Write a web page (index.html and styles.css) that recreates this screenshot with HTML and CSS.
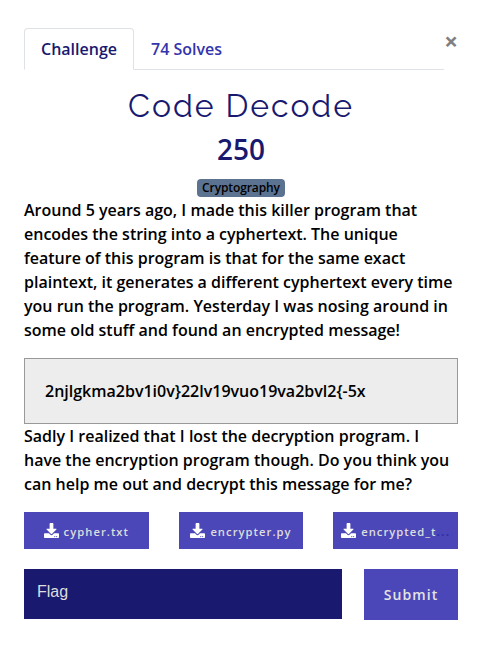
FILE: index.html
```html
<!DOCTYPE html>
<html lang="en">
<head>
<meta charset="utf-8">
<title>Code Decode</title>
<link rel="stylesheet" href="styles.css">
</head>
<body>
<svg class="defs" width="0" height="0"><symbol id="download" viewBox="0 0 512 512"><path fill="currentColor" d="M216 0h80c13.300 0 24 10.700 24 24v168h87.700c17.800 0 26.700 21.500 14.100 34.100L269.700 378.300c-7.500 7.500-19.800 7.500-27.300 0L90.100 226.100c-12.600-12.600-3.700-34.100 14.100-34.100H192V24c0-13.300 10.700-24 24-24zm296 376v112c0 13.300-10.700 24-24 24H24c-13.300 0-24-10.700-24-24V376c0-13.300 10.700-24 24-24h146.700l49 49c20.100 20.100 52.500 20.100 72.600 0l49-49H488c13.300 0 24 10.700 24 24zm-124 88c0-11-9-20-20-20s-20 9-20 20 9 20 20 20 20-9 20-20zm64 0c0-11-9-20-20-20s-20 9-20 20 9 20 20 20 20-9 20-20z"/></symbol></svg>
<main class="modal">
  <header class="top">
    <nav class="tabs">
      <a class="tab active">Challenge</a>
      <a class="tab">74 Solves</a>
    </nav>
    <button class="close" aria-label="Close">×</button>
  </header>
  <h2 class="name">Code Decode</h2>
  <h3 class="value">250</h3>
  <div class="tags"><span class="tag">Cryptography</span></div>
  <p class="desc">Around 5 years ago, I made this killer program that encodes the string into a cyphertext. The unique feature of this program is that for the same exact plaintext, it generates a different cyphertext every time you run the program. Yesterday I was nosing around in some old stuff and found an encrypted message!</p>
  <div class="cipher">2njlgkma2bv1i0v}22lv19vuo19va2bvl2{-5x</div>
  <p class="desc">Sadly I realized that I lost the decryption program. I have the encryption program though. Do you think you can help me out and decrypt this message for me?</p>
  <div class="files">
    <a class="file"><svg class="icon"><use href="#download"/></svg><span class="label">cypher.txt</span></a>
    <a class="file"><svg class="icon"><use href="#download"/></svg><span class="label">encrypter.py</span></a>
    <a class="file"><svg class="icon"><use href="#download"/></svg><span class="label">encrypted_t<span class="more">...</span></span></a>
  </div>
  <div class="answer">
    <input class="flag" placeholder="Flag" aria-label="Flag">
    <button class="submit">Submit</button>
  </div>
</main>
</body>
</html>
```
FILE: styles.css
```css
* { box-sizing: border-box; }
body { margin: 0; background: #fff; color: #000; font: 600 16px/24px "Open Sans", sans-serif; }
.defs { display: block; }
.modal { padding: 28px 23px 0 24px; }
.top { display: flex; }
.tabs { display: flex; flex: 1; height: 42px; border-bottom: 1px solid #dee2e6; }
.tab { height: 42px; padding: 8px 16px; border: 1px solid transparent; color: #3434ac; white-space: nowrap; }
.active { color: #191970; background: #fff; border-color: #dee2e6 #dee2e6 #fff; border-radius: 4px 4px 0 0; }
.close { width: 14px; height: 26px; padding: 0; border: 0; background: none; color: #808080; font: 700 24px/24px "Open Sans", sans-serif; }
.name { margin: 17px 0 0; text-align: center; color: #191970; font: 400 32px/38px Raleway, Lato, sans-serif; letter-spacing: 1.92px; }
.value { margin: 7px 0 0; text-align: center; color: #191970; font-size: 28px; line-height: 34px; font-weight: 600; }
.tags { display: flex; justify-content: center; margin: 13px 0 1px; }
.tag { height: 18px; padding: 3px 4.8px; border-radius: 4px; background: #5b7290; font-size: 12px; line-height: 12px; letter-spacing: -0.1px; }
.desc { margin: 0; }
.cipher { height: 66px; margin: 16px 0 0; padding: 20px; border: 1px solid #999; background: #ededed; }
.files { display: grid; grid-template-columns: repeat(3, 1fr); column-gap: 30px; margin-top: 16px; }
.file { display: flex; align-items: center; justify-content: center; height: 37px; gap: 5px; background: #4b47b8; color: #dedede; font-size: 11.2px; letter-spacing: 1.05px; white-space: nowrap; }
.icon { width: 15px; height: 15px; color: #fff; flex: none; }
.label { line-height: 16px; padding-top: 2px; }
.more { color: #3030a8; font-size: 12px; font-weight: 700; letter-spacing: 1.1px; }
.answer { display: flex; justify-content: space-between; margin-top: 20px; }
.flag { width: 318px; height: 50px; padding: 0 13px 5px; border: 0; background: #191970; color: #dedede; font: 16px "Liberation Sans", sans-serif; }
.flag::placeholder { color: #dedede; opacity: 1; }
.submit { width: 94px; height: 51px; padding: 0; border: 0; background: #4b47b8; color: #e4e4e4; font: 600 14px "Open Sans", sans-serif; letter-spacing: 1.1px; }
```
